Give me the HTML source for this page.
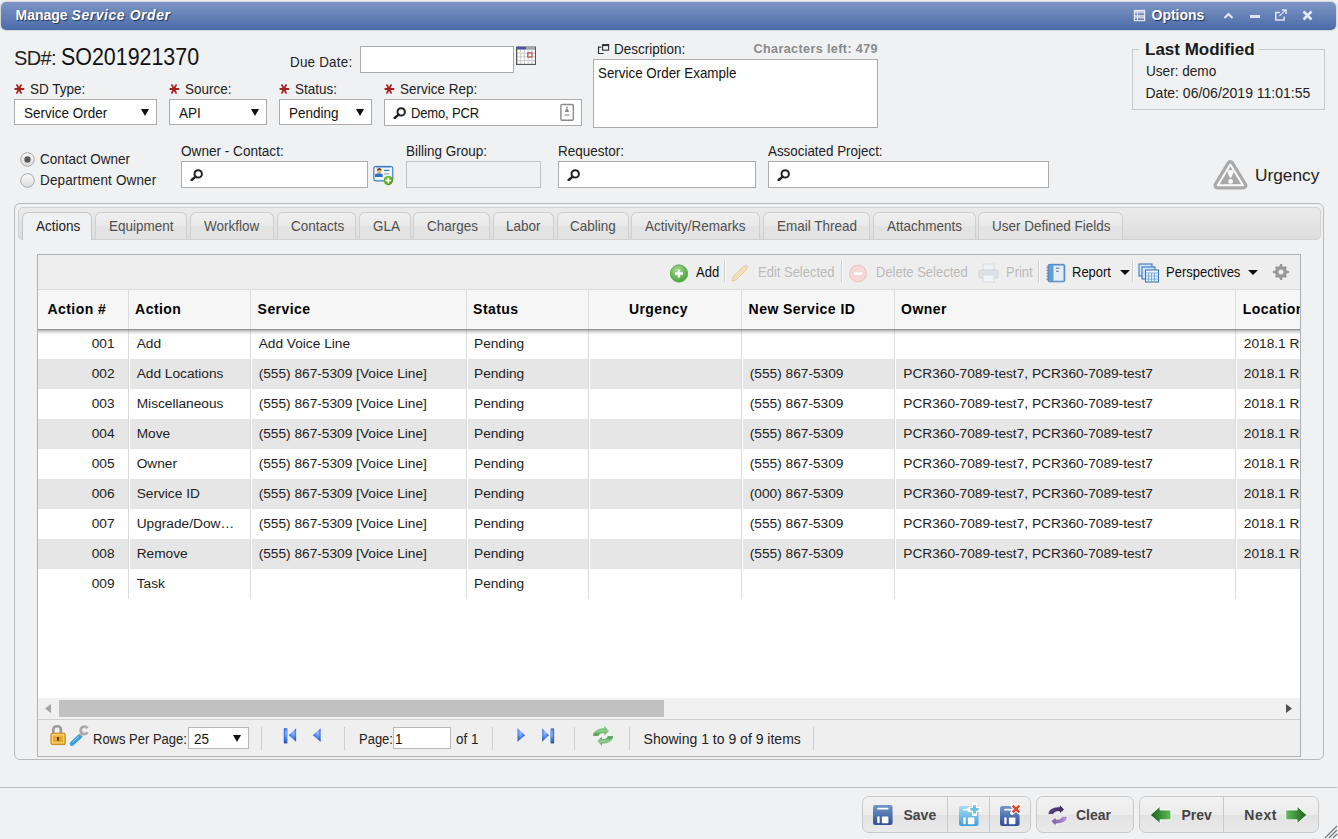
<!DOCTYPE html><html><head><meta charset="utf-8"><title>Manage Service Order</title><style>
*{margin:0;padding:0;box-sizing:border-box}
html,body{width:1338px;height:839px;overflow:hidden;background:#f0f1f3;font-family:"Liberation Sans",sans-serif}
.t{position:absolute;white-space:nowrap}
.b{position:absolute}
.inp{position:absolute;background:#fff;border:1px solid #ababab}
.ico{position:absolute}
</style></head><body>
<div class="b" style="left:1px;top:2px;width:1335px;height:28px;border-radius:5px;background:linear-gradient(#7c95c4,#4b6ba8);box-shadow:0 0 1px 1px #d4d4d8;"></div>
<div class="t " style="left:15.5px;top:7.85px;font-size:14px;line-height:14px;font-weight:bold;font-style:normal;color:#fff;text-shadow:1px 1px 1px #1d3260;">Manage <i style="letter-spacing:0.55px">Service Order</i></div>
<svg class="ico" style="left:1133px;top:9px" width="13" height="13" viewBox="0 0 13 13"><rect x="1.8" y="1.8" width="9.4" height="2.6" fill="#c3cee2"/><rect x="1.8" y="7" width="9.4" height="2.6" fill="#c3cee2"/><rect x="1.4" y="1.4" width="10.2" height="10.2" fill="none" stroke="#e6e9ef" stroke-width="1.2"/><path d="M1.4 6.4H11.6M4.5 1.4V11.6" stroke="#e6e9ef" stroke-width="0.9"/></svg>
<div class="t " style="left:1151.5px;top:8.05px;font-size:14px;line-height:14px;font-weight:bold;font-style:normal;color:#fff;text-shadow:1px 1px 1px #1d3260;">Options</div>
<svg class="ico" style="left:1223px;top:11px" width="11" height="9" viewBox="0 0 11 9"><path d="M1.5 7L5.5 3L9.5 7" fill="none" stroke="#dfe6f2" stroke-width="2.2"/></svg>
<div class="b" style="left:1250px;top:14.7px;width:10px;height:3.0px;background:#dfe6f2;"></div>
<svg class="ico" style="left:1274px;top:8px" width="14" height="14" viewBox="0 0 14 14"><path d="M6 4.6H1.8V12.1H10.1V8.6" fill="none" stroke="#dfe6f2" stroke-width="1.5"/><path d="M5.4 8.2L11.2 2.4" stroke="#dfe6f2" stroke-width="1.1"/><path d="M7.9 1.9H12.1V6.1" fill="none" stroke="#dfe6f2" stroke-width="1.5"/></svg>
<svg class="ico" style="left:1302px;top:10px" width="11" height="11" viewBox="0 0 11 11"><path d="M1.5 1.5L9.5 9.5M9.5 1.5L1.5 9.5" stroke="#e3e8f2" stroke-width="2.6"/></svg>
<div class="t " style="left:14px;top:48.07px;font-size:20px;line-height:20px;font-weight:normal;font-style:normal;color:#222;letter-spacing:-0.6px;">SD#:</div>
<div class="t " style="left:61px;top:44.68px;font-size:24px;line-height:24px;font-weight:normal;font-style:normal;color:#111;transform:scaleX(0.892);transform-origin:0 0;">SO201921370</div>
<div class="t " style="left:289.6px;top:55.28px;font-size:14.204px;line-height:14.204px;font-weight:normal;font-style:normal;color:#222;letter-spacing:0.25px;transform:scaleX(0.9434);transform-origin:0 0;">Due Date:</div>
<div class="inp" style="left:360px;top:46px;width:154px;height:27px"></div>
<svg class="ico" style="left:516px;top:46px" width="20" height="19" viewBox="0 0 20 19"><rect x="0" y="0.5" width="20" height="18.5" fill="#555"/><rect x="1.2" y="0.8" width="17.6" height="17" fill="#cdcdcd"/><rect x="1.6" y="4.0" width="2.6" height="2.6" fill="#fff"/><rect x="1.6" y="7.7" width="2.6" height="2.6" fill="#fff"/><rect x="1.6" y="11.4" width="2.6" height="2.6" fill="#fff"/><rect x="1.6" y="15.1" width="2.6" height="2.6" fill="#fff"/><rect x="5.3" y="4.0" width="2.6" height="2.6" fill="#fff"/><rect x="5.3" y="7.7" width="2.6" height="2.6" fill="#fff"/><rect x="5.3" y="11.4" width="2.6" height="2.6" fill="#fff"/><rect x="5.3" y="15.1" width="2.6" height="2.6" fill="#fff"/><rect x="9.0" y="4.0" width="2.6" height="2.6" fill="#fff"/><rect x="9.0" y="7.7" width="2.6" height="2.6" fill="#fff"/><rect x="9.0" y="11.4" width="2.6" height="2.6" fill="#fff"/><rect x="9.0" y="15.1" width="2.6" height="2.6" fill="#fff"/><rect x="12.7" y="4.0" width="2.6" height="2.6" fill="#fff"/><rect x="12.7" y="7.7" width="2.6" height="2.6" fill="#fff"/><rect x="12.7" y="11.4" width="2.6" height="2.6" fill="#fff"/><rect x="12.7" y="15.1" width="2.6" height="2.6" fill="#fff"/><rect x="16.4" y="4.0" width="2.6" height="2.6" fill="#fff"/><rect x="16.4" y="7.7" width="2.6" height="2.6" fill="#fff"/><rect x="16.4" y="11.4" width="2.6" height="2.6" fill="#fff"/><rect x="16.4" y="15.1" width="2.6" height="2.6" fill="#fff"/><rect x="1.2" y="0.8" width="8.8" height="2.6" fill="#4d4dab"/><rect x="10" y="0.8" width="8.8" height="2.6" fill="#a6a6a6"/><rect x="11.8" y="6.8" width="4.2" height="4.2" fill="none" stroke="#b44" stroke-width="1.1"/></svg>
<svg class="ico" style="left:597px;top:43px" width="13" height="12" viewBox="0 0 13 12"><rect x="5.6" y="1.6" width="6" height="5.6" fill="none" stroke="#333" stroke-width="1.1"/><rect x="5.1" y="1.1" width="7" height="2" fill="#333"/><path d="M4.3 4.1H1.5V10.5H6.7" fill="none" stroke="#333" stroke-width="1.2"/></svg>
<div class="t " style="left:614px;top:41.59px;font-size:14.31px;line-height:14.31px;font-weight:normal;font-style:normal;color:#222;transform:scaleX(0.9434);transform-origin:0 0;">Description:</div>
<div class="t " style="right:460px;top:43.03px;font-size:12.6px;line-height:12.6px;font-weight:bold;font-style:normal;color:#8a8a8a;letter-spacing:0.38px;">Characters left: 479</div>
<div class="inp" style="left:593px;top:59px;width:285px;height:69px"></div>
<div class="t " style="left:598px;top:66.18px;font-size:14.204px;line-height:14.204px;font-weight:normal;font-style:normal;color:#111;transform:scaleX(0.9434);transform-origin:0 0;">Service Order Example</div>
<div class="b" style="left:1132px;top:49px;width:193px;height:61px;border:1px solid #c9c9c9;"></div>
<div class="b" style="left:1139px;top:44px;width:120px;height:8px;background:#f0f1f3;"></div>
<div class="t " style="left:1145px;top:41.41px;font-size:17px;line-height:17px;font-weight:bold;font-style:normal;color:#1a1a1a;">Last Modified</div>
<div class="t " style="left:1145.5px;top:64.10px;font-size:14.416px;line-height:14.416px;font-weight:normal;font-style:normal;color:#222;transform:scaleX(0.9434);transform-origin:0 0;">User: demo</div>
<div class="t " style="left:1145.5px;top:85.85px;font-size:14px;line-height:14px;font-weight:normal;font-style:normal;color:#222;">Date: 06/06/2019 11:01:55</div>
<svg class="ico" style="left:14px;top:84px" width="11" height="11" viewBox="0 0 11 11"><path d="M1.3 5H9.5M3 1.1L7 8.9M7 1.1L3 8.9" stroke="#a82222" stroke-width="1.85" stroke-linecap="round"/></svg>
<div class="t " style="left:30px;top:82.19px;font-size:14.31px;line-height:14.31px;font-weight:normal;font-style:normal;color:#222;transform:scaleX(0.9434);transform-origin:0 0;">SD Type:</div>
<svg class="ico" style="left:169px;top:84px" width="11" height="11" viewBox="0 0 11 11"><path d="M1.3 5H9.5M3 1.1L7 8.9M7 1.1L3 8.9" stroke="#a82222" stroke-width="1.85" stroke-linecap="round"/></svg>
<div class="t " style="left:185px;top:82.19px;font-size:14.31px;line-height:14.31px;font-weight:normal;font-style:normal;color:#222;transform:scaleX(0.9434);transform-origin:0 0;">Source:</div>
<svg class="ico" style="left:279px;top:84px" width="11" height="11" viewBox="0 0 11 11"><path d="M1.3 5H9.5M3 1.1L7 8.9M7 1.1L3 8.9" stroke="#a82222" stroke-width="1.85" stroke-linecap="round"/></svg>
<div class="t " style="left:295px;top:82.19px;font-size:14.31px;line-height:14.31px;font-weight:normal;font-style:normal;color:#222;transform:scaleX(0.9434);transform-origin:0 0;">Status:</div>
<svg class="ico" style="left:384px;top:84px" width="11" height="11" viewBox="0 0 11 11"><path d="M1.3 5H9.5M3 1.1L7 8.9M7 1.1L3 8.9" stroke="#a82222" stroke-width="1.85" stroke-linecap="round"/></svg>
<div class="t " style="left:400px;top:82.19px;font-size:14.31px;line-height:14.31px;font-weight:normal;font-style:normal;color:#222;transform:scaleX(0.9434);transform-origin:0 0;">Service Rep:</div>
<div class="inp" style="left:14px;top:99px;width:143px;height:26px"></div>
<div class="t " style="left:24px;top:106.29px;font-size:14.31px;line-height:14.31px;font-weight:normal;font-style:normal;color:#111;transform:scaleX(0.9434);transform-origin:0 0;">Service Order</div>
<svg class="ico" style="left:140.5px;top:109px" width="8" height="7" viewBox="0 0 8 7"><path d="M0 0H8L4 7Z" fill="#111"/></svg>
<div class="inp" style="left:169px;top:99px;width:98px;height:26px"></div>
<div class="t " style="left:179px;top:106.29px;font-size:14.31px;line-height:14.31px;font-weight:normal;font-style:normal;color:#111;transform:scaleX(0.9434);transform-origin:0 0;">API</div>
<svg class="ico" style="left:250.5px;top:109px" width="8" height="7" viewBox="0 0 8 7"><path d="M0 0H8L4 7Z" fill="#111"/></svg>
<div class="inp" style="left:279px;top:99px;width:93px;height:26px"></div>
<div class="t " style="left:289px;top:106.29px;font-size:14.31px;line-height:14.31px;font-weight:normal;font-style:normal;color:#111;transform:scaleX(0.9434);transform-origin:0 0;">Pending</div>
<svg class="ico" style="left:355.5px;top:109px" width="8" height="7" viewBox="0 0 8 7"><path d="M0 0H8L4 7Z" fill="#111"/></svg>
<div class="inp" style="left:384px;top:99px;width:198px;height:27px"></div>
<svg class="ico" style="left:393px;top:107px" width="13" height="12" viewBox="0 0 13 12"><circle cx="8.2" cy="4.9" r="3.7" fill="none" stroke="#222" stroke-width="2"/><path d="M5.6 7.6L1.7 11" stroke="#222" stroke-width="2.5" stroke-linecap="round"/></svg>
<div class="t " style="left:410.5px;top:106.84px;font-size:13.780000000000001px;line-height:13.780000000000001px;font-weight:normal;font-style:normal;color:#111;letter-spacing:-0.15px;transform:scaleX(0.9434);transform-origin:0 0;">Demo, PCR</div>
<svg class="ico" style="left:550px;top:98px" width="34" height="30" viewBox="0 0 34 30"><rect x="10.9" y="6.5" width="12.4" height="15.8" rx="1.2" fill="#fff" stroke="#8a8a8a" stroke-width="1.4"/><circle cx="16.9" cy="9.6" r="1.1" fill="#9a9a9a"/><path d="M14.9 13.9Q15.2 11 16.9 10.4Q18.6 11 18.9 13.9Z" fill="#888"/><rect x="14.3" y="16.1" width="5.3" height="2.1" rx="1" fill="#c2c2c2"/></svg>
<svg class="ico" style="left:20px;top:152px" width="15" height="15" viewBox="0 0 15 15"><defs><linearGradient id="rg152" x1="0" y1="0" x2="0" y2="1"><stop offset="0" stop-color="#fafafa"/><stop offset="1" stop-color="#dcdcdc"/></linearGradient></defs><circle cx="7.5" cy="7.5" r="6.8" fill="url(#rg152)" stroke="#a8a8a8"/><circle cx="7.5" cy="7.5" r="3.2" fill="#5a5a5a"/></svg>
<svg class="ico" style="left:20px;top:173px" width="15" height="15" viewBox="0 0 15 15"><defs><linearGradient id="rg173" x1="0" y1="0" x2="0" y2="1"><stop offset="0" stop-color="#fafafa"/><stop offset="1" stop-color="#dcdcdc"/></linearGradient></defs><circle cx="7.5" cy="7.5" r="6.8" fill="url(#rg173)" stroke="#a8a8a8"/></svg>
<div class="t " style="left:40px;top:151.59px;font-size:14.31px;line-height:14.31px;font-weight:normal;font-style:normal;color:#222;transform:scaleX(0.9434);transform-origin:0 0;">Contact Owner</div>
<div class="t " style="left:39.5px;top:173.09px;font-size:14.31px;line-height:14.31px;font-weight:normal;font-style:normal;color:#222;letter-spacing:0.16px;transform:scaleX(0.9434);transform-origin:0 0;">Department Owner</div>
<div class="t " style="left:181px;top:143.80px;font-size:14.416px;line-height:14.416px;font-weight:normal;font-style:normal;color:#222;transform:scaleX(0.9434);transform-origin:0 0;">Owner - Contact:</div>
<div class="t " style="left:406px;top:143.89px;font-size:14.31px;line-height:14.31px;font-weight:normal;font-style:normal;color:#222;transform:scaleX(0.9434);transform-origin:0 0;">Billing Group:</div>
<div class="t " style="left:558px;top:143.89px;font-size:14.31px;line-height:14.31px;font-weight:normal;font-style:normal;color:#222;transform:scaleX(0.9434);transform-origin:0 0;">Requestor:</div>
<div class="t " style="left:768px;top:143.98px;font-size:14.204px;line-height:14.204px;font-weight:normal;font-style:normal;color:#222;transform:scaleX(0.9434);transform-origin:0 0;">Associated Project:</div>
<div class="inp" style="left:181px;top:161px;width:187px;height:27px"></div>
<div class="inp" style="left:406px;top:161px;width:135px;height:27px;background:#f0f1f3;border-color:#c4c4c4"></div>
<div class="inp" style="left:558px;top:161px;width:198px;height:27px"></div>
<div class="inp" style="left:768px;top:161px;width:281px;height:27px"></div>
<svg class="ico" style="left:190px;top:169px" width="13" height="12" viewBox="0 0 13 12"><circle cx="8.2" cy="4.9" r="3.7" fill="none" stroke="#222" stroke-width="2"/><path d="M5.6 7.6L1.7 11" stroke="#222" stroke-width="2.5" stroke-linecap="round"/></svg>
<svg class="ico" style="left:567px;top:169px" width="13" height="12" viewBox="0 0 13 12"><circle cx="8.2" cy="4.9" r="3.7" fill="none" stroke="#222" stroke-width="2"/><path d="M5.6 7.6L1.7 11" stroke="#222" stroke-width="2.5" stroke-linecap="round"/></svg>
<svg class="ico" style="left:777px;top:169px" width="13" height="12" viewBox="0 0 13 12"><circle cx="8.2" cy="4.9" r="3.7" fill="none" stroke="#222" stroke-width="2"/><path d="M5.6 7.6L1.7 11" stroke="#222" stroke-width="2.5" stroke-linecap="round"/></svg>
<svg class="ico" style="left:366px;top:160px" width="34" height="30" viewBox="0 0 34 30"><defs><radialGradient id="gg1" cx="0.45" cy="0.4" r="0.6"><stop offset="0" stop-color="#9fdc3a"/><stop offset="1" stop-color="#3a9410"/></radialGradient></defs><rect x="7.8" y="6.6" width="19" height="14.2" rx="1.8" fill="#eaf5fc" stroke="#3d7fc0" stroke-width="1.2"/><rect x="10.2" y="5.9" width="14" height="1.4" fill="#3a78b8"/><path d="M9 17H16.7V14.2Q13 12.4 9 14.2Z" fill="#2f70c8"/><circle cx="13.2" cy="10.9" r="2.3" fill="#e9b463"/><path d="M10.9 10.6Q11 7.9 13.2 7.9Q15.5 7.9 15.6 10.6Q13.3 9.3 10.9 10.6Z" fill="#7a4410"/><path d="M18.1 10.4H23.3" stroke="#3f80c0" stroke-width="1.3"/><path d="M18.1 13.9H23.3" stroke="#a8acb4" stroke-width="1.3"/><circle cx="22.3" cy="20.6" r="4.6" fill="url(#gg1)"/><path d="M22.3 17.8V23.4M19.5 20.6H25.1" stroke="#fff" stroke-width="1.5"/></svg>
<svg class="ico" style="left:1208px;top:155px" width="50" height="40" viewBox="0 0 50 40"><path d="M22.3 9.3L35.2 30.3H9.6Z" fill="#a9a9a9" stroke="#a9a9a9" stroke-width="8.2" stroke-linejoin="round"/><path d="M22.3 9.6L35 30.2H9.8Z" fill="#a9a9a9" stroke="#fbfbfb" stroke-width="2" stroke-linejoin="round"/><path d="M19.6 17.3Q19.6 15.1 22.5 15.1Q25.4 15.1 25.4 17.3L23.4 22.6H21.6Z" fill="#fff"/><circle cx="22.6" cy="26.4" r="2.3" fill="#fff"/></svg>
<div class="t " style="left:1255px;top:167.06px;font-size:17.3px;line-height:17.3px;font-weight:normal;font-style:normal;color:#222;">Urgency</div>
<div class="b" style="left:14px;top:203px;width:1310px;height:557px;border:1px solid #b9b9b9;border-radius:6px;"></div>
<div class="b" style="left:18px;top:207px;width:1303px;height:33px;border:1px solid #d0d0d0;border-radius:5px;background:linear-gradient(#ebebeb,#e3e3e3 60%,#dddddd);"></div>
<div class="b" style="left:22px;top:212px;width:70px;height:28px;border:1px solid #c6c6c6;border-bottom:none;border-radius:6px 6px 0 0;background:#f0f1f3;"></div>
<div class="t " style="left:35.6px;top:218.89px;font-size:14.31px;line-height:14.31px;font-weight:normal;font-style:normal;color:#222;transform:scaleX(0.9434);transform-origin:0 0;">Actions</div>
<div class="b" style="left:95px;top:212px;width:92px;height:27px;border:1px solid #cfcfcf;border-bottom:none;border-radius:6px 6px 0 0;background:linear-gradient(#efefef,#eaeaea 46%,#e2e2e2 54%,#e4e4e4);"></div>
<div class="t " style="left:109.2px;top:218.89px;font-size:14.31px;line-height:14.31px;font-weight:normal;font-style:normal;color:#505050;transform:scaleX(0.9434);transform-origin:0 0;">Equipment</div>
<div class="b" style="left:190px;top:212px;width:84px;height:27px;border:1px solid #cfcfcf;border-bottom:none;border-radius:6px 6px 0 0;background:linear-gradient(#efefef,#eaeaea 46%,#e2e2e2 54%,#e4e4e4);"></div>
<div class="t " style="left:203.9px;top:218.89px;font-size:14.31px;line-height:14.31px;font-weight:normal;font-style:normal;color:#505050;transform:scaleX(0.9434);transform-origin:0 0;">Workflow</div>
<div class="b" style="left:277px;top:212px;width:79px;height:27px;border:1px solid #cfcfcf;border-bottom:none;border-radius:6px 6px 0 0;background:linear-gradient(#efefef,#eaeaea 46%,#e2e2e2 54%,#e4e4e4);"></div>
<div class="t " style="left:290.5px;top:218.89px;font-size:14.31px;line-height:14.31px;font-weight:normal;font-style:normal;color:#505050;transform:scaleX(0.9434);transform-origin:0 0;">Contacts</div>
<div class="b" style="left:359px;top:212px;width:52px;height:27px;border:1px solid #cfcfcf;border-bottom:none;border-radius:6px 6px 0 0;background:linear-gradient(#efefef,#eaeaea 46%,#e2e2e2 54%,#e4e4e4);"></div>
<div class="t " style="left:372.6px;top:218.89px;font-size:14.31px;line-height:14.31px;font-weight:normal;font-style:normal;color:#505050;transform:scaleX(0.9434);transform-origin:0 0;">GLA</div>
<div class="b" style="left:413px;top:212px;width:77px;height:27px;border:1px solid #cfcfcf;border-bottom:none;border-radius:6px 6px 0 0;background:linear-gradient(#efefef,#eaeaea 46%,#e2e2e2 54%,#e4e4e4);"></div>
<div class="t " style="left:426.9px;top:218.89px;font-size:14.31px;line-height:14.31px;font-weight:normal;font-style:normal;color:#505050;transform:scaleX(0.9434);transform-origin:0 0;">Charges</div>
<div class="b" style="left:493px;top:212px;width:61px;height:27px;border:1px solid #cfcfcf;border-bottom:none;border-radius:6px 6px 0 0;background:linear-gradient(#efefef,#eaeaea 46%,#e2e2e2 54%,#e4e4e4);"></div>
<div class="t " style="left:506.3px;top:218.89px;font-size:14.31px;line-height:14.31px;font-weight:normal;font-style:normal;color:#505050;transform:scaleX(0.9434);transform-origin:0 0;">Labor</div>
<div class="b" style="left:557px;top:212px;width:72px;height:27px;border:1px solid #cfcfcf;border-bottom:none;border-radius:6px 6px 0 0;background:linear-gradient(#efefef,#eaeaea 46%,#e2e2e2 54%,#e4e4e4);"></div>
<div class="t " style="left:570.4px;top:218.89px;font-size:14.31px;line-height:14.31px;font-weight:normal;font-style:normal;color:#505050;transform:scaleX(0.9434);transform-origin:0 0;">Cabling</div>
<div class="b" style="left:631px;top:212px;width:129px;height:27px;border:1px solid #cfcfcf;border-bottom:none;border-radius:6px 6px 0 0;background:linear-gradient(#efefef,#eaeaea 46%,#e2e2e2 54%,#e4e4e4);"></div>
<div class="t " style="left:645px;top:218.89px;font-size:14.31px;line-height:14.31px;font-weight:normal;font-style:normal;color:#505050;transform:scaleX(0.9434);transform-origin:0 0;">Activity/Remarks</div>
<div class="b" style="left:763px;top:212px;width:107px;height:27px;border:1px solid #cfcfcf;border-bottom:none;border-radius:6px 6px 0 0;background:linear-gradient(#efefef,#eaeaea 46%,#e2e2e2 54%,#e4e4e4);"></div>
<div class="t " style="left:776.7px;top:218.89px;font-size:14.31px;line-height:14.31px;font-weight:normal;font-style:normal;color:#505050;transform:scaleX(0.9434);transform-origin:0 0;">Email Thread</div>
<div class="b" style="left:873px;top:212px;width:103px;height:27px;border:1px solid #cfcfcf;border-bottom:none;border-radius:6px 6px 0 0;background:linear-gradient(#efefef,#eaeaea 46%,#e2e2e2 54%,#e4e4e4);"></div>
<div class="t " style="left:886.8px;top:218.89px;font-size:14.31px;line-height:14.31px;font-weight:normal;font-style:normal;color:#505050;transform:scaleX(0.9434);transform-origin:0 0;">Attachments</div>
<div class="b" style="left:978px;top:212px;width:145px;height:27px;border:1px solid #cfcfcf;border-bottom:none;border-radius:6px 6px 0 0;background:linear-gradient(#efefef,#eaeaea 46%,#e2e2e2 54%,#e4e4e4);"></div>
<div class="t " style="left:992px;top:218.89px;font-size:14.31px;line-height:14.31px;font-weight:normal;font-style:normal;color:#505050;transform:scaleX(0.9434);transform-origin:0 0;">User Defined Fields</div>
<div class="b" style="left:37px;top:254px;width:1264px;height:503px;border:1px solid #b0b0b0;background:#fff;"></div>
<div class="b" style="left:38px;top:255px;width:1262px;height:34px;background:#eeeeee;"></div>
<svg class="ico" style="left:669px;top:264px" width="20" height="19" viewBox="0 0 20 19"><defs><radialGradient id="ga" cx="0.4" cy="0.3" r="0.8"><stop offset="0" stop-color="#a6dc8c"/><stop offset="1" stop-color="#3f9a36"/></radialGradient></defs><circle cx="10" cy="9.5" r="8.6" fill="url(#ga)" stroke="#5aa84c"/><path d="M10 5.5V13.5M6 9.5H14" stroke="#fff" stroke-width="2.4"/></svg>
<div class="t " style="left:695.5px;top:265.94px;font-size:13.780000000000001px;line-height:13.780000000000001px;font-weight:normal;font-style:normal;color:#111;transform:scaleX(0.9434);transform-origin:0 0;">Add</div>
<div class="b" style="left:724px;top:260px;width:2px;height:22px;background:linear-gradient(90deg,#cfcfcf 50%,#fafafa 50%);"></div>
<svg class="ico" style="left:730px;top:262px" width="20" height="21" viewBox="0 0 20 21"><path d="M3 15L14 4L17 7L6 18L2 19Z" fill="#f3e1b5" stroke="#e2cc9a"/><path d="M14 4L16 2L19 5L17 7Z" fill="#e8d3d0"/></svg>
<div class="t " style="left:758px;top:265.94px;font-size:13.780000000000001px;line-height:13.780000000000001px;font-weight:normal;font-style:normal;color:#bababa;transform:scaleX(0.9434);transform-origin:0 0;">Edit Selected</div>
<div class="b" style="left:841px;top:260px;width:2px;height:22px;background:linear-gradient(90deg,#cfcfcf 50%,#fafafa 50%);"></div>
<svg class="ico" style="left:848px;top:264px" width="20" height="19" viewBox="0 0 20 19"><circle cx="10" cy="9.5" r="8.4" fill="#f5d8d8" stroke="#efc6c6" stroke-width="1.2"/><path d="M6 9.5H14" stroke="#fff" stroke-width="2.4"/></svg>
<div class="t " style="left:875.5px;top:265.94px;font-size:13.780000000000001px;line-height:13.780000000000001px;font-weight:normal;font-style:normal;color:#bababa;transform:scaleX(0.9434);transform-origin:0 0;">Delete Selected</div>
<svg class="ico" style="left:978px;top:263px" width="21" height="20" viewBox="0 0 21 20"><rect x="5" y="1" width="11" height="7" fill="#eef2f6" stroke="#d6dbe0"/><rect x="1" y="7" width="19" height="8" rx="2" fill="#dde2e7" stroke="#cdd3d9"/><rect x="5" y="12" width="11" height="7" fill="#f2f5f8" stroke="#d6dbe0"/></svg>
<div class="t " style="left:1005.5px;top:265.94px;font-size:13.780000000000001px;line-height:13.780000000000001px;font-weight:normal;font-style:normal;color:#bababa;transform:scaleX(0.9434);transform-origin:0 0;">Print</div>
<div class="b" style="left:1038px;top:260px;width:2px;height:22px;background:linear-gradient(90deg,#cfcfcf 50%,#fafafa 50%);"></div>
<svg class="ico" style="left:1046px;top:263px" width="20" height="20" viewBox="0 0 20 20"><rect x="2" y="1.3" width="16.8" height="17.5" rx="1.6" fill="#62a0da" stroke="#3b74b2" stroke-width="0.8"/><rect x="7.6" y="2.8" width="9.7" height="15" fill="#e4eef9" stroke="#a8c8e8" stroke-width="0.6"/><path d="M10 5.2H13.5M10 8.3H12.8" stroke="#50607a" stroke-width="0.9"/><path d="M0.8 4.3H3.6M0.8 7.3H3.6M0.8 10.3H3.6M0.8 13.3H3.6M0.8 16.3H3.6" stroke="#7a8896" stroke-width="1.1" stroke-linecap="round"/></svg>
<div class="t " style="left:1072px;top:265.94px;font-size:13.780000000000001px;line-height:13.780000000000001px;font-weight:normal;font-style:normal;color:#111;transform:scaleX(0.9434);transform-origin:0 0;">Report</div>
<svg class="ico" style="left:1120px;top:270px" width="10" height="5" viewBox="0 0 10 5"><path d="M0 0H10L5 5Z" fill="#111"/></svg>
<div class="b" style="left:1132px;top:260px;width:2px;height:22px;background:linear-gradient(90deg,#cfcfcf 50%,#fafafa 50%);"></div>
<svg class="ico" style="left:1138px;top:263px" width="22" height="20" viewBox="0 0 22 20"><rect x="1" y="1" width="13" height="12" fill="#cfe4f7" stroke="#2f6fb5"/><rect x="4" y="4" width="13" height="12" fill="#cfe4f7" stroke="#2f6fb5"/><rect x="7.5" y="7" width="13" height="12" fill="#e8f2fb" stroke="#2f6fb5"/><path d="M7.5 10H20.5M10.5 10V19M13.5 10V19M16.5 10V19M7.5 13H20.5M7.5 16H20.5" stroke="#6d9fd4" stroke-width="0.8"/></svg>
<div class="t " style="left:1165.5px;top:265.94px;font-size:13.780000000000001px;line-height:13.780000000000001px;font-weight:normal;font-style:normal;color:#111;transform:scaleX(0.9434);transform-origin:0 0;">Perspectives</div>
<svg class="ico" style="left:1248px;top:270px" width="10" height="5" viewBox="0 0 10 5"><path d="M0 0H10L5 5Z" fill="#111"/></svg>
<svg class="ico" style="left:1272px;top:263px" width="18" height="18" viewBox="0 0 18 18"><g fill="#999"><circle cx="9" cy="9" r="5.9"/><path d="M8 0.9H10L10.8 4.5H7.2Z M8 17.1H10L10.8 13.5H7.2Z M0.9 8V10L4.5 10.8V7.2Z M17.1 8V10L13.5 10.8V7.2Z"/><g transform="rotate(45 9 9)"><path d="M8 1.6H10L10.8 4.5H7.2Z M8 16.4H10L10.8 13.5H7.2Z M1.6 8V10L4.5 10.8V7.2Z M16.4 8V10L13.5 10.8V7.2Z"/></g></g><circle cx="9" cy="9" r="2.5" fill="#efefef"/></svg>
<div class="b" style="left:38px;top:289px;width:1262px;height:40px;background:#f6f6f6;border-top:1px solid #dcdcdc;"></div>
<div class="b" style="left:128px;top:289px;width:1px;height:40px;background:#dcdcdc;"></div>
<div class="b" style="left:250px;top:289px;width:1px;height:40px;background:#dcdcdc;"></div>
<div class="b" style="left:466px;top:289px;width:1px;height:40px;background:#dcdcdc;"></div>
<div class="b" style="left:588px;top:289px;width:1px;height:40px;background:#dcdcdc;"></div>
<div class="b" style="left:741px;top:289px;width:1px;height:40px;background:#dcdcdc;"></div>
<div class="b" style="left:894px;top:289px;width:1px;height:40px;background:#dcdcdc;"></div>
<div class="b" style="left:1235px;top:289px;width:1px;height:40px;background:#dcdcdc;"></div>
<div style="position:absolute;left:38px;top:290px;width:1262px;height:408px;overflow:hidden">
<div class="t" style="left:9.399999999999999px;top:11.95px;font-size:14px;line-height:14px;font-weight:bold;color:#000;letter-spacing:0.45px;">Action #</div>
<div class="t" style="left:97.1px;top:11.95px;font-size:14px;line-height:14px;font-weight:bold;color:#000;letter-spacing:0.45px;">Action</div>
<div class="t" style="left:219.60000000000002px;top:11.95px;font-size:14px;line-height:14px;font-weight:bold;color:#000;letter-spacing:0.45px;">Service</div>
<div class="t" style="left:435.1px;top:11.95px;font-size:14px;line-height:14px;font-weight:bold;color:#000;letter-spacing:0.45px;">Status</div>
<div class="t" style="left:590.9px;top:11.95px;font-size:14px;line-height:14px;font-weight:bold;color:#000;letter-spacing:0.45px;">Urgency</div>
<div class="t" style="left:710.6px;top:11.95px;font-size:14px;line-height:14px;font-weight:bold;color:#000;letter-spacing:0.45px;">New Service ID</div>
<div class="t" style="left:863.1px;top:11.95px;font-size:14px;line-height:14px;font-weight:bold;color:#000;letter-spacing:0.45px;">Owner</div>
<div class="t" style="left:1204.8px;top:11.95px;font-size:14px;line-height:14px;font-weight:bold;color:#000;letter-spacing:0.45px;">Location</div>
<div class="b" style="left:90px;top:39px;width:1px;height:30px;background:#dedede"></div>
<div class="b" style="left:212px;top:39px;width:1px;height:30px;background:#dedede"></div>
<div class="b" style="left:428px;top:39px;width:1px;height:30px;background:#dedede"></div>
<div class="b" style="left:550px;top:39px;width:1px;height:30px;background:#dedede"></div>
<div class="b" style="left:703px;top:39px;width:1px;height:30px;background:#dedede"></div>
<div class="b" style="left:856px;top:39px;width:1px;height:30px;background:#dedede"></div>
<div class="b" style="left:1197px;top:39px;width:1px;height:30px;background:#dedede"></div>
<div class="t" style="left:76.5px;top:46.25px;font-size:14px;line-height:14px;font-weight:normal;color:#222;"></div>
<div class="t" style="right:1185.5px;top:46.50px;font-size:13.7px;line-height:13.7px;color:#222">001</div>
<div class="t" style="left:98.69999999999999px;top:46.50px;font-size:13.7px;line-height:13.7px;font-weight:normal;color:#222;">Add</div>
<div class="t" style="left:220.7px;top:46.50px;font-size:13.7px;line-height:13.7px;font-weight:normal;color:#222;">Add Voice Line</div>
<div class="t" style="left:436px;top:46.50px;font-size:13.7px;line-height:13.7px;font-weight:normal;color:#222;">Pending</div>
<div class="t" style="left:711.8px;top:46.50px;font-size:13.7px;line-height:13.7px;font-weight:normal;color:#222;"></div>
<div class="t" style="left:865.3px;top:46.50px;font-size:13.7px;line-height:13.7px;font-weight:normal;color:#222;"></div>
<div class="t" style="left:1205.8px;top:46.50px;font-size:13.7px;line-height:13.7px;font-weight:normal;color:#222;">2018.1 R</div>
<div class="b" style="left:0px;top:69px;width:1262px;height:30px;background:#e6e6e6"></div>
<div class="b" style="left:90px;top:69px;width:2px;height:30px;background:linear-gradient(90deg,#d8d8d8 50%,#fff 50%)"></div>
<div class="b" style="left:212px;top:69px;width:2px;height:30px;background:linear-gradient(90deg,#d8d8d8 50%,#fff 50%)"></div>
<div class="b" style="left:428px;top:69px;width:2px;height:30px;background:linear-gradient(90deg,#d8d8d8 50%,#fff 50%)"></div>
<div class="b" style="left:550px;top:69px;width:2px;height:30px;background:linear-gradient(90deg,#d8d8d8 50%,#fff 50%)"></div>
<div class="b" style="left:703px;top:69px;width:2px;height:30px;background:linear-gradient(90deg,#d8d8d8 50%,#fff 50%)"></div>
<div class="b" style="left:856px;top:69px;width:2px;height:30px;background:linear-gradient(90deg,#d8d8d8 50%,#fff 50%)"></div>
<div class="b" style="left:1197px;top:69px;width:2px;height:30px;background:linear-gradient(90deg,#d8d8d8 50%,#fff 50%)"></div>
<div class="t" style="left:76.5px;top:76.25px;font-size:14px;line-height:14px;font-weight:normal;color:#222;"></div>
<div class="t" style="right:1185.5px;top:76.50px;font-size:13.7px;line-height:13.7px;color:#222">002</div>
<div class="t" style="left:98.69999999999999px;top:76.50px;font-size:13.7px;line-height:13.7px;font-weight:normal;color:#222;">Add Locations</div>
<div class="t" style="left:220.7px;top:76.50px;font-size:13.7px;line-height:13.7px;font-weight:normal;color:#222;">(555) 867-5309 [Voice Line]</div>
<div class="t" style="left:436px;top:76.50px;font-size:13.7px;line-height:13.7px;font-weight:normal;color:#222;">Pending</div>
<div class="t" style="left:711.8px;top:76.50px;font-size:13.7px;line-height:13.7px;font-weight:normal;color:#222;">(555) 867-5309</div>
<div class="t" style="left:865.3px;top:76.50px;font-size:13.7px;line-height:13.7px;font-weight:normal;color:#222;">PCR360-7089-test7, PCR360-7089-test7</div>
<div class="t" style="left:1205.8px;top:76.50px;font-size:13.7px;line-height:13.7px;font-weight:normal;color:#222;">2018.1 R</div>
<div class="b" style="left:90px;top:99px;width:1px;height:30px;background:#dedede"></div>
<div class="b" style="left:212px;top:99px;width:1px;height:30px;background:#dedede"></div>
<div class="b" style="left:428px;top:99px;width:1px;height:30px;background:#dedede"></div>
<div class="b" style="left:550px;top:99px;width:1px;height:30px;background:#dedede"></div>
<div class="b" style="left:703px;top:99px;width:1px;height:30px;background:#dedede"></div>
<div class="b" style="left:856px;top:99px;width:1px;height:30px;background:#dedede"></div>
<div class="b" style="left:1197px;top:99px;width:1px;height:30px;background:#dedede"></div>
<div class="t" style="left:76.5px;top:106.25px;font-size:14px;line-height:14px;font-weight:normal;color:#222;"></div>
<div class="t" style="right:1185.5px;top:106.50px;font-size:13.7px;line-height:13.7px;color:#222">003</div>
<div class="t" style="left:98.69999999999999px;top:106.50px;font-size:13.7px;line-height:13.7px;font-weight:normal;color:#222;">Miscellaneous</div>
<div class="t" style="left:220.7px;top:106.50px;font-size:13.7px;line-height:13.7px;font-weight:normal;color:#222;">(555) 867-5309 [Voice Line]</div>
<div class="t" style="left:436px;top:106.50px;font-size:13.7px;line-height:13.7px;font-weight:normal;color:#222;">Pending</div>
<div class="t" style="left:711.8px;top:106.50px;font-size:13.7px;line-height:13.7px;font-weight:normal;color:#222;">(555) 867-5309</div>
<div class="t" style="left:865.3px;top:106.50px;font-size:13.7px;line-height:13.7px;font-weight:normal;color:#222;">PCR360-7089-test7, PCR360-7089-test7</div>
<div class="t" style="left:1205.8px;top:106.50px;font-size:13.7px;line-height:13.7px;font-weight:normal;color:#222;">2018.1 R</div>
<div class="b" style="left:0px;top:129px;width:1262px;height:30px;background:#e6e6e6"></div>
<div class="b" style="left:90px;top:129px;width:2px;height:30px;background:linear-gradient(90deg,#d8d8d8 50%,#fff 50%)"></div>
<div class="b" style="left:212px;top:129px;width:2px;height:30px;background:linear-gradient(90deg,#d8d8d8 50%,#fff 50%)"></div>
<div class="b" style="left:428px;top:129px;width:2px;height:30px;background:linear-gradient(90deg,#d8d8d8 50%,#fff 50%)"></div>
<div class="b" style="left:550px;top:129px;width:2px;height:30px;background:linear-gradient(90deg,#d8d8d8 50%,#fff 50%)"></div>
<div class="b" style="left:703px;top:129px;width:2px;height:30px;background:linear-gradient(90deg,#d8d8d8 50%,#fff 50%)"></div>
<div class="b" style="left:856px;top:129px;width:2px;height:30px;background:linear-gradient(90deg,#d8d8d8 50%,#fff 50%)"></div>
<div class="b" style="left:1197px;top:129px;width:2px;height:30px;background:linear-gradient(90deg,#d8d8d8 50%,#fff 50%)"></div>
<div class="t" style="left:76.5px;top:136.25px;font-size:14px;line-height:14px;font-weight:normal;color:#222;"></div>
<div class="t" style="right:1185.5px;top:136.50px;font-size:13.7px;line-height:13.7px;color:#222">004</div>
<div class="t" style="left:98.69999999999999px;top:136.50px;font-size:13.7px;line-height:13.7px;font-weight:normal;color:#222;">Move</div>
<div class="t" style="left:220.7px;top:136.50px;font-size:13.7px;line-height:13.7px;font-weight:normal;color:#222;">(555) 867-5309 [Voice Line]</div>
<div class="t" style="left:436px;top:136.50px;font-size:13.7px;line-height:13.7px;font-weight:normal;color:#222;">Pending</div>
<div class="t" style="left:711.8px;top:136.50px;font-size:13.7px;line-height:13.7px;font-weight:normal;color:#222;">(555) 867-5309</div>
<div class="t" style="left:865.3px;top:136.50px;font-size:13.7px;line-height:13.7px;font-weight:normal;color:#222;">PCR360-7089-test7, PCR360-7089-test7</div>
<div class="t" style="left:1205.8px;top:136.50px;font-size:13.7px;line-height:13.7px;font-weight:normal;color:#222;">2018.1 R</div>
<div class="b" style="left:90px;top:159px;width:1px;height:30px;background:#dedede"></div>
<div class="b" style="left:212px;top:159px;width:1px;height:30px;background:#dedede"></div>
<div class="b" style="left:428px;top:159px;width:1px;height:30px;background:#dedede"></div>
<div class="b" style="left:550px;top:159px;width:1px;height:30px;background:#dedede"></div>
<div class="b" style="left:703px;top:159px;width:1px;height:30px;background:#dedede"></div>
<div class="b" style="left:856px;top:159px;width:1px;height:30px;background:#dedede"></div>
<div class="b" style="left:1197px;top:159px;width:1px;height:30px;background:#dedede"></div>
<div class="t" style="left:76.5px;top:166.25px;font-size:14px;line-height:14px;font-weight:normal;color:#222;"></div>
<div class="t" style="right:1185.5px;top:166.50px;font-size:13.7px;line-height:13.7px;color:#222">005</div>
<div class="t" style="left:98.69999999999999px;top:166.50px;font-size:13.7px;line-height:13.7px;font-weight:normal;color:#222;">Owner</div>
<div class="t" style="left:220.7px;top:166.50px;font-size:13.7px;line-height:13.7px;font-weight:normal;color:#222;">(555) 867-5309 [Voice Line]</div>
<div class="t" style="left:436px;top:166.50px;font-size:13.7px;line-height:13.7px;font-weight:normal;color:#222;">Pending</div>
<div class="t" style="left:711.8px;top:166.50px;font-size:13.7px;line-height:13.7px;font-weight:normal;color:#222;">(555) 867-5309</div>
<div class="t" style="left:865.3px;top:166.50px;font-size:13.7px;line-height:13.7px;font-weight:normal;color:#222;">PCR360-7089-test7, PCR360-7089-test7</div>
<div class="t" style="left:1205.8px;top:166.50px;font-size:13.7px;line-height:13.7px;font-weight:normal;color:#222;">2018.1 R</div>
<div class="b" style="left:0px;top:189px;width:1262px;height:30px;background:#e6e6e6"></div>
<div class="b" style="left:90px;top:189px;width:2px;height:30px;background:linear-gradient(90deg,#d8d8d8 50%,#fff 50%)"></div>
<div class="b" style="left:212px;top:189px;width:2px;height:30px;background:linear-gradient(90deg,#d8d8d8 50%,#fff 50%)"></div>
<div class="b" style="left:428px;top:189px;width:2px;height:30px;background:linear-gradient(90deg,#d8d8d8 50%,#fff 50%)"></div>
<div class="b" style="left:550px;top:189px;width:2px;height:30px;background:linear-gradient(90deg,#d8d8d8 50%,#fff 50%)"></div>
<div class="b" style="left:703px;top:189px;width:2px;height:30px;background:linear-gradient(90deg,#d8d8d8 50%,#fff 50%)"></div>
<div class="b" style="left:856px;top:189px;width:2px;height:30px;background:linear-gradient(90deg,#d8d8d8 50%,#fff 50%)"></div>
<div class="b" style="left:1197px;top:189px;width:2px;height:30px;background:linear-gradient(90deg,#d8d8d8 50%,#fff 50%)"></div>
<div class="t" style="left:76.5px;top:196.25px;font-size:14px;line-height:14px;font-weight:normal;color:#222;"></div>
<div class="t" style="right:1185.5px;top:196.50px;font-size:13.7px;line-height:13.7px;color:#222">006</div>
<div class="t" style="left:98.69999999999999px;top:196.50px;font-size:13.7px;line-height:13.7px;font-weight:normal;color:#222;">Service ID</div>
<div class="t" style="left:220.7px;top:196.50px;font-size:13.7px;line-height:13.7px;font-weight:normal;color:#222;">(555) 867-5309 [Voice Line]</div>
<div class="t" style="left:436px;top:196.50px;font-size:13.7px;line-height:13.7px;font-weight:normal;color:#222;">Pending</div>
<div class="t" style="left:711.8px;top:196.50px;font-size:13.7px;line-height:13.7px;font-weight:normal;color:#222;">(000) 867-5309</div>
<div class="t" style="left:865.3px;top:196.50px;font-size:13.7px;line-height:13.7px;font-weight:normal;color:#222;">PCR360-7089-test7, PCR360-7089-test7</div>
<div class="t" style="left:1205.8px;top:196.50px;font-size:13.7px;line-height:13.7px;font-weight:normal;color:#222;">2018.1 R</div>
<div class="b" style="left:90px;top:219px;width:1px;height:30px;background:#dedede"></div>
<div class="b" style="left:212px;top:219px;width:1px;height:30px;background:#dedede"></div>
<div class="b" style="left:428px;top:219px;width:1px;height:30px;background:#dedede"></div>
<div class="b" style="left:550px;top:219px;width:1px;height:30px;background:#dedede"></div>
<div class="b" style="left:703px;top:219px;width:1px;height:30px;background:#dedede"></div>
<div class="b" style="left:856px;top:219px;width:1px;height:30px;background:#dedede"></div>
<div class="b" style="left:1197px;top:219px;width:1px;height:30px;background:#dedede"></div>
<div class="t" style="left:76.5px;top:226.25px;font-size:14px;line-height:14px;font-weight:normal;color:#222;"></div>
<div class="t" style="right:1185.5px;top:226.50px;font-size:13.7px;line-height:13.7px;color:#222">007</div>
<div class="t" style="left:98.69999999999999px;top:226.50px;font-size:13.7px;line-height:13.7px;font-weight:normal;color:#222;">Upgrade/Dow…</div>
<div class="t" style="left:220.7px;top:226.50px;font-size:13.7px;line-height:13.7px;font-weight:normal;color:#222;">(555) 867-5309 [Voice Line]</div>
<div class="t" style="left:436px;top:226.50px;font-size:13.7px;line-height:13.7px;font-weight:normal;color:#222;">Pending</div>
<div class="t" style="left:711.8px;top:226.50px;font-size:13.7px;line-height:13.7px;font-weight:normal;color:#222;">(555) 867-5309</div>
<div class="t" style="left:865.3px;top:226.50px;font-size:13.7px;line-height:13.7px;font-weight:normal;color:#222;">PCR360-7089-test7, PCR360-7089-test7</div>
<div class="t" style="left:1205.8px;top:226.50px;font-size:13.7px;line-height:13.7px;font-weight:normal;color:#222;">2018.1 R</div>
<div class="b" style="left:0px;top:249px;width:1262px;height:30px;background:#e6e6e6"></div>
<div class="b" style="left:90px;top:249px;width:2px;height:30px;background:linear-gradient(90deg,#d8d8d8 50%,#fff 50%)"></div>
<div class="b" style="left:212px;top:249px;width:2px;height:30px;background:linear-gradient(90deg,#d8d8d8 50%,#fff 50%)"></div>
<div class="b" style="left:428px;top:249px;width:2px;height:30px;background:linear-gradient(90deg,#d8d8d8 50%,#fff 50%)"></div>
<div class="b" style="left:550px;top:249px;width:2px;height:30px;background:linear-gradient(90deg,#d8d8d8 50%,#fff 50%)"></div>
<div class="b" style="left:703px;top:249px;width:2px;height:30px;background:linear-gradient(90deg,#d8d8d8 50%,#fff 50%)"></div>
<div class="b" style="left:856px;top:249px;width:2px;height:30px;background:linear-gradient(90deg,#d8d8d8 50%,#fff 50%)"></div>
<div class="b" style="left:1197px;top:249px;width:2px;height:30px;background:linear-gradient(90deg,#d8d8d8 50%,#fff 50%)"></div>
<div class="t" style="left:76.5px;top:256.25px;font-size:14px;line-height:14px;font-weight:normal;color:#222;"></div>
<div class="t" style="right:1185.5px;top:256.50px;font-size:13.7px;line-height:13.7px;color:#222">008</div>
<div class="t" style="left:98.69999999999999px;top:256.50px;font-size:13.7px;line-height:13.7px;font-weight:normal;color:#222;">Remove</div>
<div class="t" style="left:220.7px;top:256.50px;font-size:13.7px;line-height:13.7px;font-weight:normal;color:#222;">(555) 867-5309 [Voice Line]</div>
<div class="t" style="left:436px;top:256.50px;font-size:13.7px;line-height:13.7px;font-weight:normal;color:#222;">Pending</div>
<div class="t" style="left:711.8px;top:256.50px;font-size:13.7px;line-height:13.7px;font-weight:normal;color:#222;">(555) 867-5309</div>
<div class="t" style="left:865.3px;top:256.50px;font-size:13.7px;line-height:13.7px;font-weight:normal;color:#222;">PCR360-7089-test7, PCR360-7089-test7</div>
<div class="t" style="left:1205.8px;top:256.50px;font-size:13.7px;line-height:13.7px;font-weight:normal;color:#222;">2018.1 R</div>
<div class="b" style="left:90px;top:279px;width:1px;height:30px;background:#dedede"></div>
<div class="b" style="left:212px;top:279px;width:1px;height:30px;background:#dedede"></div>
<div class="b" style="left:428px;top:279px;width:1px;height:30px;background:#dedede"></div>
<div class="b" style="left:550px;top:279px;width:1px;height:30px;background:#dedede"></div>
<div class="b" style="left:703px;top:279px;width:1px;height:30px;background:#dedede"></div>
<div class="b" style="left:856px;top:279px;width:1px;height:30px;background:#dedede"></div>
<div class="b" style="left:1197px;top:279px;width:1px;height:30px;background:#dedede"></div>
<div class="t" style="left:76.5px;top:286.25px;font-size:14px;line-height:14px;font-weight:normal;color:#222;"></div>
<div class="t" style="right:1185.5px;top:286.50px;font-size:13.7px;line-height:13.7px;color:#222">009</div>
<div class="t" style="left:98.69999999999999px;top:286.50px;font-size:13.7px;line-height:13.7px;font-weight:normal;color:#222;">Task</div>
<div class="t" style="left:220.7px;top:286.50px;font-size:13.7px;line-height:13.7px;font-weight:normal;color:#222;"></div>
<div class="t" style="left:436px;top:286.50px;font-size:13.7px;line-height:13.7px;font-weight:normal;color:#222;">Pending</div>
<div class="t" style="left:711.8px;top:286.50px;font-size:13.7px;line-height:13.7px;font-weight:normal;color:#222;"></div>
<div class="t" style="left:865.3px;top:286.50px;font-size:13.7px;line-height:13.7px;font-weight:normal;color:#222;"></div>
<div class="t" style="left:1205.8px;top:286.50px;font-size:13.7px;line-height:13.7px;font-weight:normal;color:#222;"></div>
</div>
<div class="b" style="left:38px;top:329px;width:1262px;height:7px;background:linear-gradient(rgba(110,110,110,0.85),rgba(140,140,140,0.4) 30%,rgba(200,200,200,0.1) 75%,rgba(255,255,255,0));"></div>
<div class="b" style="left:38px;top:698px;width:1262px;height:21px;background:#f0f0f0;"></div>
<div class="b" style="left:59px;top:700px;width:605px;height:17px;background:#c1c1c1;"></div>
<svg class="ico" style="left:45px;top:704px" width="6" height="9" viewBox="0 0 6 9"><path d="M6 0V9L0 4.5Z" fill="#a3a3a3"/></svg>
<svg class="ico" style="left:1286px;top:704px" width="6" height="9" viewBox="0 0 6 9"><path d="M0 0V9L6 4.5Z" fill="#505050"/></svg>
<div class="b" style="left:38px;top:719px;width:1262px;height:37px;background:#efefef;border-top:1px solid #cfcfcf;"></div>
<svg class="ico" style="left:45px;top:722px" width="46" height="26" viewBox="0 0 46 26"><path d="M8.3 11.4V7.6Q8.3 4.3 12.1 4.3Q15.9 4.3 15.9 7.6V11.4" fill="none" stroke="#9c9c9c" stroke-width="2.6"/><rect x="5.9" y="11.2" width="14.4" height="11.4" rx="1.3" fill="#e8a62a" stroke="#c98b24"/><rect x="7.4" y="12.8" width="11.3" height="8.1" fill="#efb231" stroke="#fde08a" stroke-width="0.9"/><path d="M8 15.9H18.2M8 18.7H18.2" stroke="#d1931e" stroke-width="0.8"/><rect x="12" y="15" width="2.1" height="3.8" rx="0.8" fill="#4a3000"/><path d="M27 21.6L35 14.2" stroke="#3c9ee0" stroke-width="4.6" stroke-linecap="round"/><path d="M27.6 20.2L33.8 14.6" stroke="#9fd4f6" stroke-width="1"/><path d="M35.2 13.6L37.6 11.2" stroke="#b0b0b0" stroke-width="2.4"/><path d="M42.4 6.3A3.7 3.7 0 1 0 42.4 10.3" fill="none" stroke="#a9a9a9" stroke-width="2.8"/><path d="M40.3 6A2.2 2.2 0 1 0 40.3 10.6" fill="none" stroke="#e6e6e6" stroke-width="1"/></svg>
<div class="t " style="left:93.2px;top:733.24px;font-size:13.780000000000001px;line-height:13.780000000000001px;font-weight:normal;font-style:normal;color:#222;transform:scaleX(0.9434);transform-origin:0 0;">Rows Per Page:</div>
<div class="inp" style="left:188px;top:727px;width:61px;height:22px;border-color:#b8b8b8"></div>
<div class="t " style="left:194px;top:731.79px;font-size:14.31px;line-height:14.31px;font-weight:normal;font-style:normal;color:#111;transform:scaleX(0.9434);transform-origin:0 0;">25</div>
<svg class="ico" style="left:232.5px;top:735px" width="8" height="7" viewBox="0 0 8 7"><path d="M0 0H8L4 7Z" fill="#111"/></svg>
<div class="b" style="left:261px;top:727px;width:1px;height:23px;background:#cfcfcf;"></div>
<div class="b" style="left:344px;top:727px;width:1px;height:23px;background:#cfcfcf;"></div>
<div class="b" style="left:492px;top:727px;width:1px;height:23px;background:#cfcfcf;"></div>
<div class="b" style="left:574px;top:727px;width:1px;height:23px;background:#cfcfcf;"></div>
<div class="b" style="left:629px;top:727px;width:1px;height:23px;background:#cfcfcf;"></div>
<div class="b" style="left:813px;top:727px;width:1px;height:23px;background:#cfcfcf;"></div>
<svg class="ico" style="left:278px;top:722px" width="50" height="30" viewBox="0 0 50 30"><defs><radialGradient id="bg1" cx="0.6" cy="0.35" r="0.75"><stop offset="0" stop-color="#9cc0f8"/><stop offset="0.55" stop-color="#3f78e6"/><stop offset="1" stop-color="#1c46a8"/></radialGradient></defs><rect x="5.8" y="6" width="3.6" height="15.5" rx="0.9" fill="url(#bg1)"/><path d="M10.8 13.3L18.1 6.2V19.8Z" fill="url(#bg1)"/><path d="M34.9 13.3L42.6 6.2V19.8Z" fill="url(#bg1)"/></svg>
<div class="t " style="left:359.2px;top:733.24px;font-size:13.780000000000001px;line-height:13.780000000000001px;font-weight:normal;font-style:normal;color:#222;transform:scaleX(0.9434);transform-origin:0 0;">Page:</div>
<div class="inp" style="left:393px;top:727px;width:58px;height:22px;border-color:#b8b8b8"></div>
<div class="t " style="left:394.5px;top:731.79px;font-size:14.31px;line-height:14.31px;font-weight:normal;font-style:normal;color:#111;transform:scaleX(0.9434);transform-origin:0 0;">1</div>
<div class="t " style="left:455.5px;top:731.79px;font-size:14.31px;line-height:14.31px;font-weight:normal;font-style:normal;color:#222;transform:scaleX(0.9434);transform-origin:0 0;">of 1</div>
<svg class="ico" style="left:510px;top:722px" width="50" height="30" viewBox="0 0 50 30"><defs><radialGradient id="bg2" cx="0.4" cy="0.35" r="0.75"><stop offset="0" stop-color="#9cc0f8"/><stop offset="0.55" stop-color="#3f78e6"/><stop offset="1" stop-color="#1c46a8"/></radialGradient></defs><path d="M15.1 13.3L7.5 6.2V19.8Z" fill="url(#bg2)"/><path d="M39 13.3L32.1 6.2V19.8Z" fill="url(#bg2)"/><rect x="40.5" y="6.2" width="3.6" height="15.3" rx="0.9" fill="url(#bg2)"/></svg>
<svg class="ico" style="left:585px;top:720px" width="35" height="32" viewBox="0 0 35 32"><defs><linearGradient id="gr1" x1="0" y1="0" x2="0" y2="1"><stop offset="0" stop-color="#5aa95a"/><stop offset="0.5" stop-color="#8fd08f"/><stop offset="1" stop-color="#3f8f3f"/></linearGradient></defs><path id="rf" d="M8 15.8Q8.6 8.4 19.3 8.3V6L24 11L19.3 15.3V12.9Q14.3 12.8 13.4 15.8Z" fill="url(#gr1)"/><path d="M8 15.8Q8.6 8.4 19.3 8.3V6L24 11L19.3 15.3V12.9Q14.3 12.8 13.4 15.8Z" fill="url(#gr1)" transform="rotate(180 18.1 16)"/></svg>
<div class="t " style="left:643.6px;top:732.05px;font-size:14px;line-height:14px;font-weight:normal;font-style:normal;color:#222;">Showing 1 to 9 of 9 items</div>
<div class="b" style="left:0px;top:787px;width:1337px;height:1px;background:#bdbdbd;"></div>
<div class="b" style="left:862px;top:796px;width:169px;height:37px;border:1px solid #c9c9c9;border-radius:7px;background:linear-gradient(#f2f2f2,#ececec 50%,#e2e2e2 52%,#eaeaea);"></div>
<div class="b" style="left:947px;top:797px;width:1px;height:35px;background:#c9c9c9;"></div>
<div class="b" style="left:989px;top:797px;width:1px;height:35px;background:#c9c9c9;"></div>
<div class="b" style="left:1036px;top:796px;width:98px;height:37px;border:1px solid #c9c9c9;border-radius:7px;background:linear-gradient(#f2f2f2,#ececec 50%,#e2e2e2 52%,#eaeaea);"></div>
<div class="b" style="left:1139px;top:796px;width:180px;height:37px;border:1px solid #c9c9c9;border-radius:7px;background:linear-gradient(#f2f2f2,#ececec 50%,#e2e2e2 52%,#eaeaea);"></div>
<div class="b" style="left:1223px;top:797px;width:1px;height:35px;background:#c9c9c9;"></div>
<svg class="ico" style="left:873px;top:805px" width="20" height="20" viewBox="0 0 20 20"><defs><linearGradient id="fl1" x1="0" y1="0" x2="0" y2="1"><stop offset="0" stop-color="#7097cc"/><stop offset="1" stop-color="#334e98"/></linearGradient></defs><rect x="0" y="0" width="19.6" height="20" rx="2.2" fill="url(#fl1)"/><rect x="4.1" y="2.7" width="11.4" height="1.9" rx="0.95" fill="#fff"/><rect x="4.3" y="11.3" width="2.3" height="6.9" rx="1" fill="#fff"/><rect x="8.9" y="11.5" width="6.5" height="6.7" rx="0.6" fill="#fff"/></svg>
<div class="t " style="left:903.5px;top:808.05px;font-size:14px;line-height:14px;font-weight:bold;font-style:normal;color:#444;">Save</div>
<svg class="ico" style="left:959.2px;top:806.3px" width="20" height="20" viewBox="0 0 20 20"><defs><linearGradient id="fl2" x1="0" y1="0" x2="0" y2="1"><stop offset="0" stop-color="#a6dcf4"/><stop offset="1" stop-color="#3fa0dc"/></linearGradient></defs><rect x="0" y="0" width="19.6" height="20" rx="2.2" fill="url(#fl2)"/><rect x="4.1" y="2.7" width="11.4" height="1.9" rx="0.95" fill="#fff"/><rect x="4.3" y="11.3" width="2.3" height="6.9" rx="1" fill="#fff"/><rect x="8.9" y="11.5" width="6.5" height="6.7" rx="0.6" fill="#fff"/></svg>
<svg class="ico" style="left:967px;top:802px" width="14" height="14" viewBox="0 0 14 14"><path d="M7.5 2.6V12.2M2.7 7.4H12.3" stroke="#fff" stroke-width="5" stroke-linecap="round"/><path d="M7.5 3.3V11.5M3.4 7.4H11.6" stroke="#6cc0ea" stroke-width="2.9"/></svg>
<svg class="ico" style="left:1000px;top:806.3px" width="20" height="20" viewBox="0 0 20 20"><defs><linearGradient id="fl3" x1="0" y1="0" x2="0" y2="1"><stop offset="0" stop-color="#7097cc"/><stop offset="1" stop-color="#334e98"/></linearGradient></defs><rect x="0" y="0" width="19.6" height="20" rx="2.2" fill="url(#fl3)"/><rect x="4.1" y="2.7" width="11.4" height="1.9" rx="0.95" fill="#fff"/><rect x="4.3" y="11.3" width="2.3" height="6.9" rx="1" fill="#fff"/><rect x="8.9" y="11.5" width="6.5" height="6.7" rx="0.6" fill="#fff"/></svg>
<svg class="ico" style="left:1009px;top:802px" width="14" height="14" viewBox="0 0 14 14"><path d="M3.2 3.2L10.8 10.8M10.8 3.2L3.2 10.8" stroke="#fff" stroke-width="4.2" stroke-linecap="round"/><path d="M3.6 3.6L10.4 10.4M10.4 3.6L3.6 10.4" stroke="#e2432a" stroke-width="2.3"/></svg>
<svg class="ico" style="left:1040px;top:798px" width="35" height="32" viewBox="0 0 35 32"><defs><linearGradient id="cl1" x1="0" y1="0" x2="1" y2="0"><stop offset="0" stop-color="#5a4488"/><stop offset="1" stop-color="#3a2c62"/></linearGradient><linearGradient id="cl2" x1="0" y1="0" x2="1" y2="0"><stop offset="0" stop-color="#b39ad6"/><stop offset="1" stop-color="#76609e"/></linearGradient></defs><g transform="translate(-0.6 0.1) scale(1.04)"><path d="M8 15.8Q8.6 8.4 19.3 8.3V6L24 11L19.3 15.3V12.9Q14.3 12.8 13.4 15.8Z" fill="url(#cl1)" stroke="#fff" stroke-width="0.7"/><path d="M8 15.8Q8.6 8.4 19.3 8.3V6L24 11L19.3 15.3V12.9Q14.3 12.8 13.4 15.8Z" fill="url(#cl2)" stroke="#fff" stroke-width="0.7" transform="rotate(180 17.6 16.6)"/></g></svg>
<div class="t " style="left:1076px;top:808.05px;font-size:14px;line-height:14px;font-weight:bold;font-style:normal;color:#444;">Clear</div>
<svg class="ico" style="left:1145px;top:800px" width="30" height="30" viewBox="0 0 30 30"><defs><linearGradient id="ag1" x1="0" y1="0" x2="1" y2="0"><stop offset="0" stop-color="#1a5e1a"/><stop offset="1" stop-color="#62bc5c"/></linearGradient></defs><path d="M5.4 15L15 6.3V10H25.9V19.8H15V23.6Z" fill="url(#ag1)" stroke="#fff" stroke-width="0.8" stroke-linejoin="round"/></svg>
<div class="t " style="left:1181.5px;top:808.05px;font-size:14px;line-height:14px;font-weight:bold;font-style:normal;color:#444;">Prev</div>
<div class="t " style="left:1244.3px;top:808.05px;font-size:14px;line-height:14px;font-weight:bold;font-style:normal;color:#444;letter-spacing:0.6px;">Next</div>
<svg class="ico" style="left:1280px;top:800px" width="30" height="30" viewBox="0 0 30 30"><defs><linearGradient id="ag2" x1="0" y1="0" x2="1" y2="0"><stop offset="0" stop-color="#62bc5c"/><stop offset="1" stop-color="#1a5e1a"/></linearGradient></defs><path d="M26.7 15L17.1 6.3V10H5.8V19.8H17.1V23.6Z" fill="url(#ag2)" stroke="#fff" stroke-width="0.8" stroke-linejoin="round"/></svg>
<svg class="ico" style="left:1322px;top:823px" width="16" height="16" viewBox="0 0 16 16"><path d="M3 15L15 3M7 15L15 7M11 15L15 11" stroke="#777" stroke-width="1.2"/></svg>
</body></html>
